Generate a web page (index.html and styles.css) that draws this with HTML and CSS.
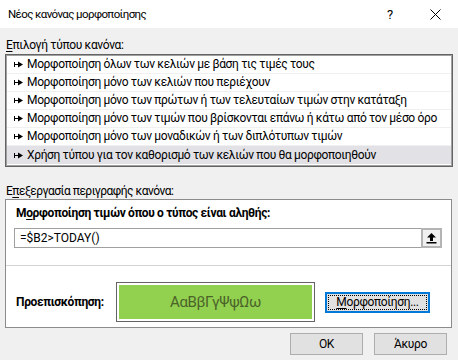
FILE: index.html
```html
<!DOCTYPE html>
<html lang="el">
<head>
<meta charset="utf-8">
<title>Νέος κανόνας μορφοποίησης</title>
<link rel="stylesheet" href="styles.css">
</head>
<body>
<div class="dialog">
  <div class="titlebar">
    <span class="title">Νέος κανόνας μορφοποίησης</span>
    <span class="help">?</span>
    <span class="close"><svg width="11" height="11" viewBox="0 0 11 11"><path d="M0.5 0.5 L10.5 10.5 M10.5 0.5 L0.5 10.5" stroke="#000" stroke-width="1" fill="none"/></svg></span>
  </div>
  <div class="content">
    <div class="label label-first"><u>Ε</u>πιλογή τύπου κανόνα:</div>
    <div class="listbox">
      <div class="row"><svg class="bullet" width="9" height="7" viewBox="0 0 9 7"><path d="M0.5 1 V6 M0.5 3.5 H5" stroke="#000" stroke-width="1" fill="none"/><path d="M4 0.5 L9 3.5 L4 6.5 Z" fill="#000"/></svg>Μορφοποίηση όλων των κελιών με βάση τις τιμές τους</div>
      <div class="row"><svg class="bullet" width="9" height="7" viewBox="0 0 9 7"><path d="M0.5 1 V6 M0.5 3.5 H5" stroke="#000" stroke-width="1" fill="none"/><path d="M4 0.5 L9 3.5 L4 6.5 Z" fill="#000"/></svg>Μορφοποίηση μόνο των κελιών που περιέχουν</div>
      <div class="row"><svg class="bullet" width="9" height="7" viewBox="0 0 9 7"><path d="M0.5 1 V6 M0.5 3.5 H5" stroke="#000" stroke-width="1" fill="none"/><path d="M4 0.5 L9 3.5 L4 6.5 Z" fill="#000"/></svg>Μορφοποίηση μόνο των πρώτων ή των τελευταίων τιμών στην κατάταξη</div>
      <div class="row"><svg class="bullet" width="9" height="7" viewBox="0 0 9 7"><path d="M0.5 1 V6 M0.5 3.5 H5" stroke="#000" stroke-width="1" fill="none"/><path d="M4 0.5 L9 3.5 L4 6.5 Z" fill="#000"/></svg>Μορφοποίηση μόνο των τιμών που βρίσκονται επάνω ή κάτω από τον μέσο όρο</div>
      <div class="row"><svg class="bullet" width="9" height="7" viewBox="0 0 9 7"><path d="M0.5 1 V6 M0.5 3.5 H5" stroke="#000" stroke-width="1" fill="none"/><path d="M4 0.5 L9 3.5 L4 6.5 Z" fill="#000"/></svg>Μορφοποίηση μόνο των μοναδικών ή των διπλότυπων τιμών</div>
      <div class="row selected"><svg class="bullet" width="9" height="7" viewBox="0 0 9 7"><path d="M0.5 1 V6 M0.5 3.5 H5" stroke="#000" stroke-width="1" fill="none"/><path d="M4 0.5 L9 3.5 L4 6.5 Z" fill="#000"/></svg>Χρήση τύπου για τον καθορισμό των κελιών που θα μορφοποιηθούν</div>
    </div>
    <div class="label label-second">Ε<u>π</u>εξεργασία περιγραφής κανόνα:</div>
    <div class="panel">
      <div class="bold-label">Μ<u>ο</u>ρφοποίηση τιμών όπου ο τύπος είναι αληθής:</div>
      <div class="formula-row">
        <div class="formula">=$B2&gt;TODAY()</div>
        <div class="collapse"><svg width="11" height="12" viewBox="0 0 11 12"><path d="M5.5 1 L10 5.5 L7 5.5 L7 9 L4 9 L4 5.5 L1 5.5 Z" fill="#000"/><rect x="0.5" y="10" width="10" height="1.5" fill="#000"/></svg></div>
      </div>
      <div class="separator"></div>
      <div class="preview-row">
        <div class="preview-label">Προεπισκόπηση:</div>
        <div class="preview-box"><div class="preview-fill">AαBβΓγΨψΩω</div></div>
        <div class="format-btn"><span class="focus"><u>Μ</u>ορφοποίηση...</span></div>
      </div>
    </div>
    <div class="buttons">
      <div class="btn">OK</div>
      <div class="btn">Άκυρο</div>
    </div>
  </div>
</div>
</body>
</html>
```

FILE: styles.css
```css
html, body {
  margin: 0;
  padding: 0;
}
body {
  width: 458px;
  height: 360px;
  background: #f0f0f0;
  font-family: Roboto, "Noto Sans", "DejaVu Sans", sans-serif;
  font-size: 12px;
  letter-spacing: -0.35px;
  color: #000;
  overflow: hidden;
}
.dialog {
  display: flex;
  flex-direction: column;
  height: 360px;
}
.titlebar {
  height: 28px;
  background: #fff;
  display: flex;
  align-items: center;
  padding-left: 8px;
}
.title {
  flex: 1;
  font-size: 11.5px;
  letter-spacing: -0.6px;
}
.help {
  width: 12px;
  text-align: center;
  margin-right: 34px;
  font-size: 13px;
}
.close {
  display: flex;
  width: 11px;
  margin-right: 17px;
}
.content {
  display: flex;
  flex-direction: column;
  padding: 0 5px 0 5px;
}
.label {
  height: 16px;
  line-height: 16px;
  padding-left: 1px;
}
.label-first {
  margin-top: 9px;
  margin-bottom: 1px;
}
.label-second {
  margin-top: 16px;
  letter-spacing: -0.5px;
}
u {
  text-decoration: underline;
  text-underline-offset: 2px;
}
.listbox {
  width: 448px;
  box-sizing: border-box;
  border: 1px solid #646464;
  box-shadow: inset 0 0 0 1px #a0a0a0;
  background: #fff;
  padding: 1px 1px 2px 1px;
}
.row {
  height: 18px;
  line-height: 17px;
  border-bottom: 1px solid #f0f0f0;
  box-sizing: border-box;
  display: flex;
  align-items: center;
  padding-left: 7px;
  white-space: nowrap;
  overflow: hidden;
}
.row.selected {
  background: #e1e1e6;
  border-bottom: none;
}
.bullet {
  margin-right: 4px;
  flex: none;
}
.panel {
  width: 447px;
  box-sizing: border-box;
  border: 1px solid #8c8c8c;
  background: #fff;
  padding: 5px 0 5px 0;
}
.bold-label {
  font-weight: bold;
  height: 16px;
  line-height: 16px;
  padding-left: 10px;
}
.formula-row {
  display: flex;
  margin: 7px 0 0 8px;
  width: 428px;
  height: 20px;
}
.formula {
  flex: 1;
  box-sizing: border-box;
  border: 1px solid #a0a0a0;
  border-right: none;
  padding-left: 5px;
  line-height: 18px;
  letter-spacing: 0;
}
.collapse {
  width: 21px;
  box-sizing: border-box;
  border: 2px solid #b4b4b4;
  background: #f0f0f0;
  display: flex;
  align-items: center;
  justify-content: center;
}
.separator {
  height: 1px;
  background: #d4d4d4;
  margin-top: 17px;
}
.preview-row {
  display: flex;
  align-items: center;
  margin-top: 16px;
  height: 40px;
}
.preview-label {
  font-weight: bold;
  width: 100px;
  padding-left: 10px;
}
.preview-box {
  width: 199px;
  height: 40px;
  box-sizing: border-box;
  border: 1px solid #646464;
  padding: 2px;
  background: #fff;
}
.preview-fill {
  height: 100%;
  background: #92d050;
  color: #4b6329;
  font-size: 15px;
  display: flex;
  align-items: center;
  justify-content: center;
}
.format-btn {
  margin-left: 10px;
  width: 105px;
  height: 21px;
  box-sizing: border-box;
  border: 2px solid #0078d7;
  background: #e1e1e1;
  padding: 1px;
  display: flex;
}
.focus {
  flex: 1;
  border: 1px dotted #000;
  display: flex;
  align-items: center;
  justify-content: center;
  line-height: 14px;
}
.buttons {
  display: flex;
  justify-content: flex-end;
  gap: 11px;
  margin-top: 5px;
  padding-right: 6px;
}
.btn {
  width: 73px;
  height: 22px;
  box-sizing: border-box;
  border: 1px solid #adadad;
  background: #e1e1e1;
  display: flex;
  align-items: center;
  justify-content: center;
}
```
